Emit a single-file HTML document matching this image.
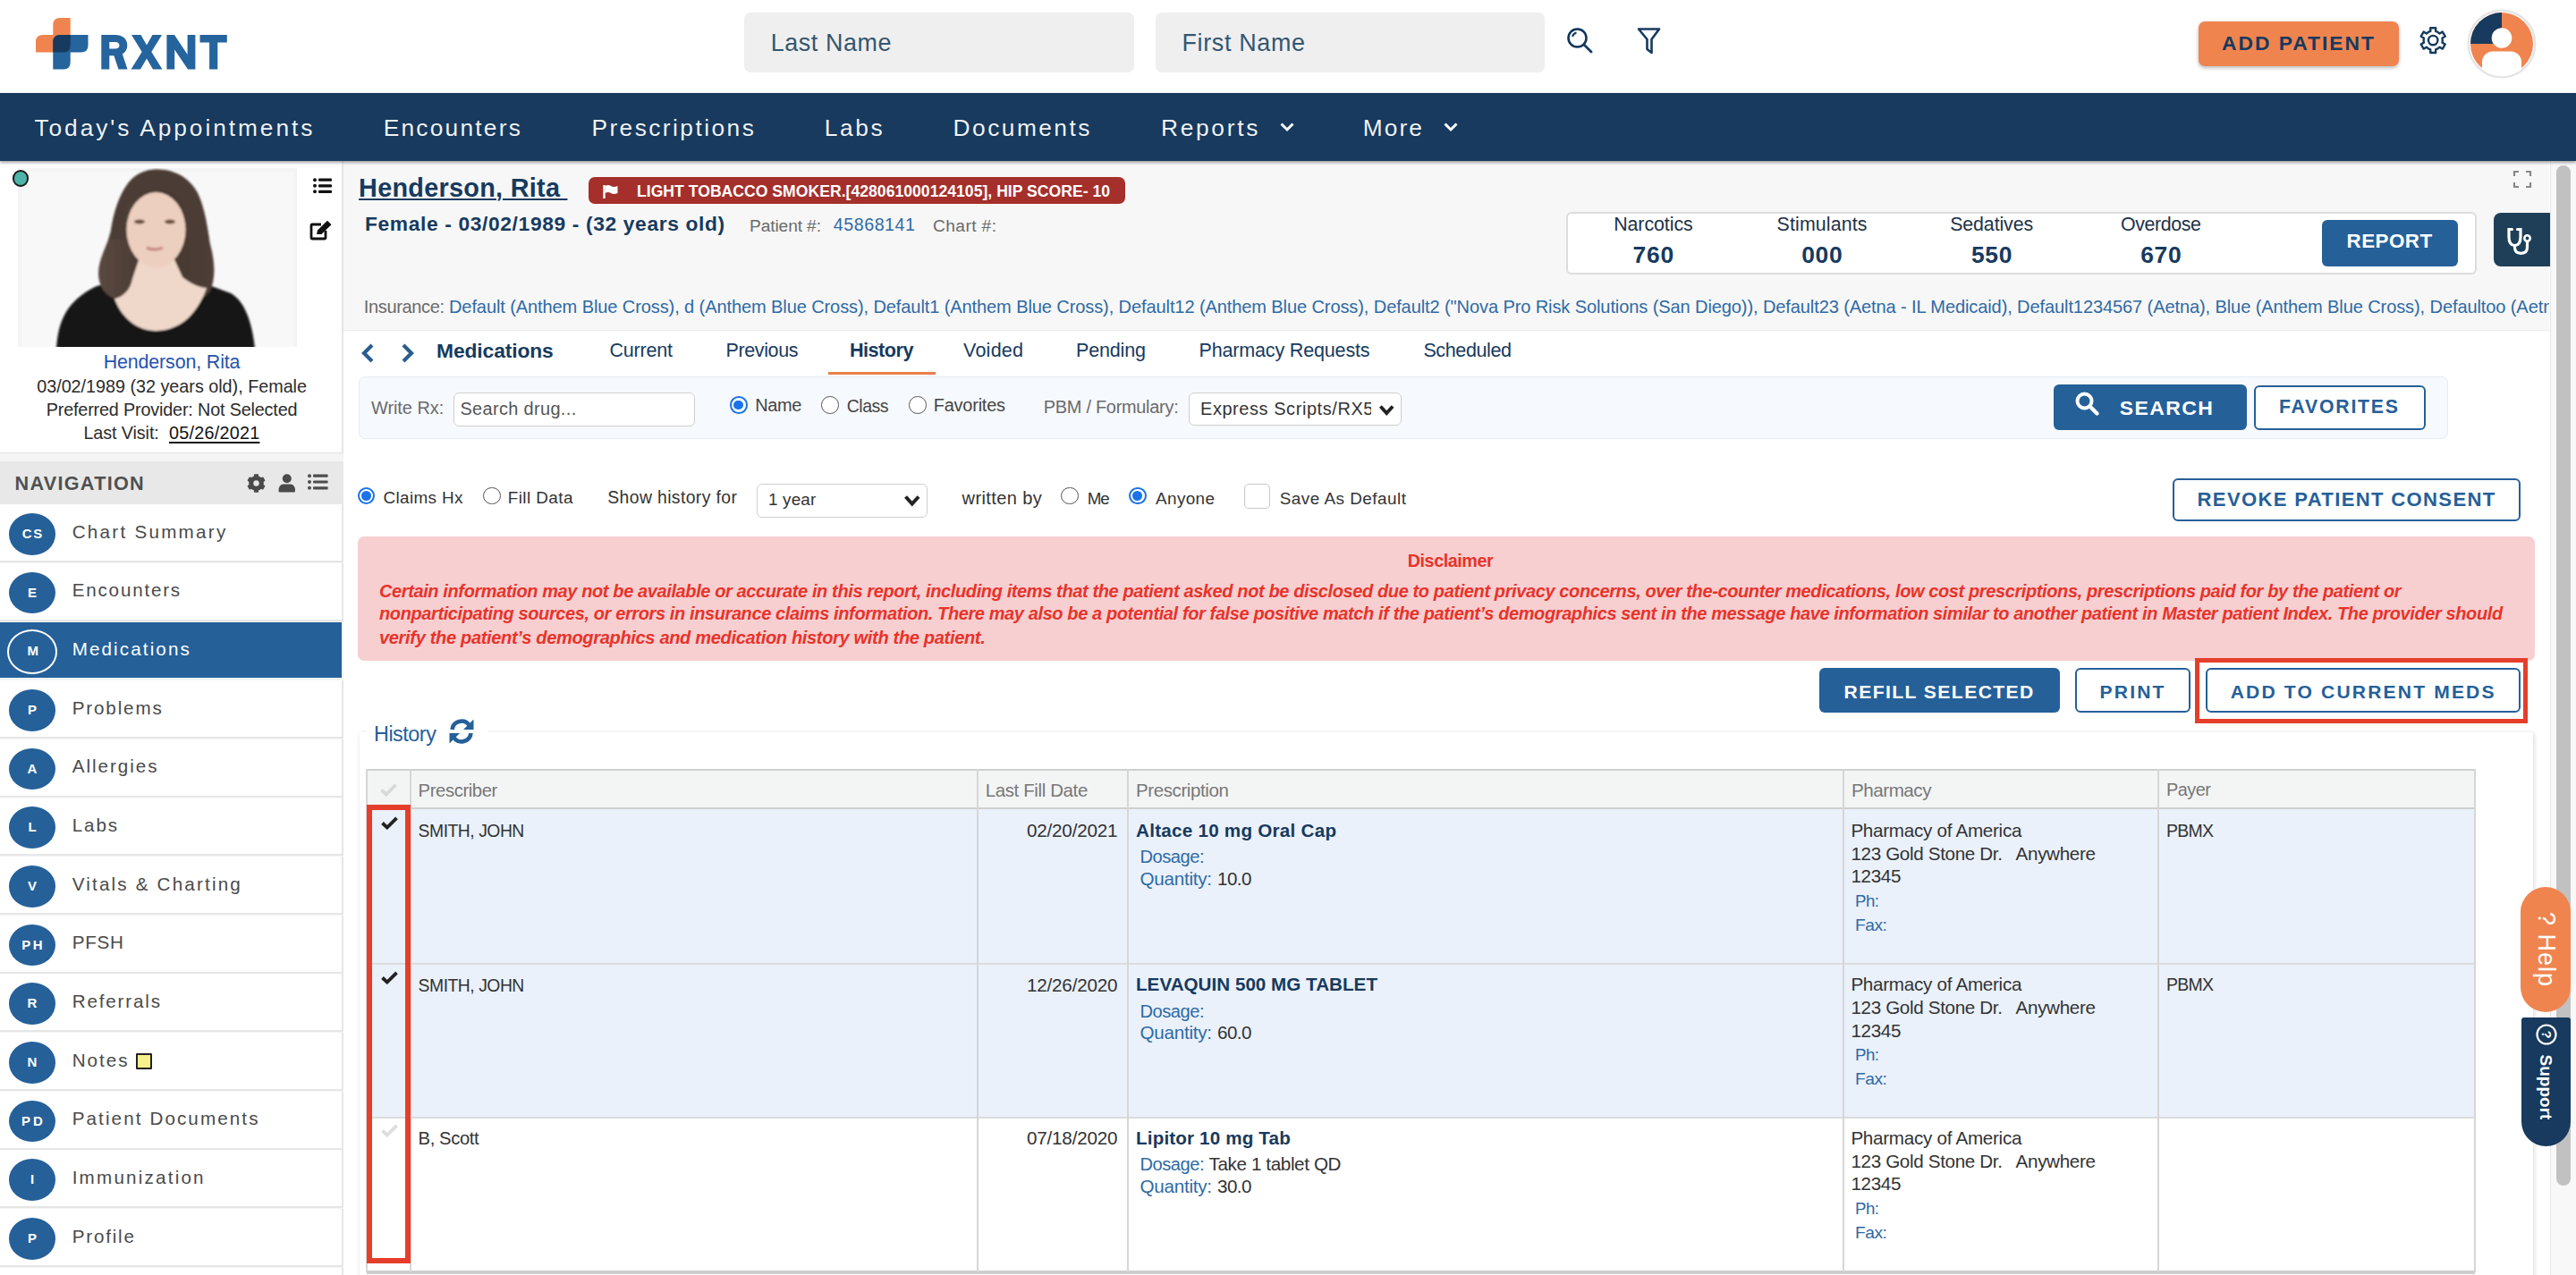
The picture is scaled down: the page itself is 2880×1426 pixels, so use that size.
<!DOCTYPE html>
<html><head><meta charset="utf-8"><style>
html,body{margin:0;padding:0;}
body{width:2880px;height:1426px;overflow:hidden;position:relative;background:#fff;font-family:"Liberation Sans",sans-serif;}
body>div,body>svg{position:absolute;}
.t{position:absolute;white-space:pre;line-height:1;}
</style></head><body>
<svg style="left:0;top:0" width="300" height="100" viewBox="0 0 300 100">
<path fill="#f0844f" d="M59.3 28 Q59.3 20 67.3 20 L78.7 20 L78.7 50.4 Q78.7 58.4 70.7 58.4 L40 58.4 L40 47 Q40 39 48 39 L59.3 39 Z"/>
<path fill="#25649d" d="M59.3 47 Q59.3 39 67.3 39 L98.5 39 L98.5 50.4 Q98.5 58.4 90.5 58.4 L78.7 58.4 L78.7 69.6 Q78.7 77.6 70.7 77.6 L59.3 77.6 Z"/>
<path fill="#173a5e" d="M59.3 47 Q59.3 39 67.3 39 L78.7 39 L78.7 50.4 Q78.7 58.4 70.7 58.4 L59.3 58.4 Z"/>
</svg>
<svg style="left:0;top:0" width="300" height="100" viewBox="0 0 300 100"><g fill="#25649d">
<path fill-rule="evenodd" d="M113.3 39 L129 39 C137.5 39 142.3 44 142.3 50.6 C142.3 57.5 137.5 62.3 129 62.3 L122.3 62.3 L122.3 77.6 L113.3 77.6 Z M122.3 47 L128.5 47 C131.8 47 133.5 48.6 133.5 50.7 C133.5 52.8 131.8 54.5 128.5 54.5 L122.3 54.5 Z"/>
<path d="M126 58 L136 58 L142.5 77.6 L132.5 77.6 Z"/>
<path d="M147 39 L157.5 39 L164 50.5 L170.5 39 L181 39 L169.3 58 L181.5 77.6 L171 77.6 L164 65.5 L157 77.6 L146.5 77.6 L158.7 58 Z"/>
<path d="M186.4 39 L195 39 L209.6 61 L209.6 39 L218.4 39 L218.4 77.6 L210 77.6 L195.2 55.5 L195.2 77.6 L186.4 77.6 Z"/>
<path d="M223.5 39 L253.8 39 L253.8 47.5 L243.3 47.5 L243.3 77.6 L234.1 77.6 L234.1 47.5 L223.5 47.5 Z"/>
</g></svg>
<div style="left:832.0px;top:14.0px;width:436.0px;height:67.0px;background:#efefef;border-radius:7px"></div>
<div style="left:1292.0px;top:14.0px;width:435.0px;height:67.0px;background:#efefef;border-radius:7px"></div>
<div class="t" id="lastname" style="left:861.7px;top:35.3px;font-size:26.90px;color:#35566f;letter-spacing:0.596px;">Last Name</div>
<div class="t" id="firstname" style="left:1321.5px;top:35.3px;font-size:26.90px;color:#35566f;letter-spacing:0.668px;">First Name</div>
<svg style="left:1748px;top:27px" width="40" height="40" viewBox="0 0 40 40">
<circle cx="15.5" cy="15.5" r="10" fill="none" stroke="#12355a" stroke-width="2.6"/>
<path d="M23 23 L31 31" stroke="#173a5e" stroke-width="2.8" stroke-linecap="round"/>
<path d="M10 14 Q11 10.5 14.5 9.5" fill="none" stroke="#173a5e" stroke-width="2"/>
</svg>
<svg style="left:1828px;top:28px" width="32" height="36" viewBox="0 0 32 36">
<path d="M4 4.5 L27 4.5 L18.5 16 L18.5 31 L13.5 27 L13.5 16 Z" fill="none" stroke="#173a5e" stroke-width="2.6" stroke-linejoin="round"/>
</svg>
<div style="left:2458.0px;top:24.0px;width:224.0px;height:50.0px;background:#f0844f;border-radius:7px;box-shadow:0 2px 4px rgba(0,0,0,.28)"></div>
<div class="t" id="addpat" style="left:2484.0px;top:37.0px;font-size:22.82px;color:#173a5e;font-weight:700;letter-spacing:2.003px;">ADD PATIENT</div>
<svg style="left:2700px;top:25px" width="42" height="42" viewBox="0 0 42 42">
<path d="M14.90 10.92 L17.27 9.91 L17.24 6.21 L23.16 6.21 L23.13 9.91 L25.50 10.92 L27.56 12.47 L30.75 10.59 L33.71 15.72 L30.49 17.54 L30.80 20.10 L30.49 22.66 L33.71 24.48 L30.75 29.61 L27.56 27.73 L25.50 29.28 L23.13 30.29 L23.16 33.99 L17.24 33.99 L17.27 30.29 L14.90 29.28 L12.84 27.73 L9.65 29.61 L6.69 24.48 L9.91 22.66 L9.60 20.10 L9.91 17.54 L6.69 15.72 L9.65 10.59 L12.84 12.47 Z" fill="none" stroke="#173a5e" stroke-width="2.4" stroke-linejoin="round"/>
<circle cx="20.2" cy="20.1" r="5.2" fill="none" stroke="#173a5e" stroke-width="2.4"/>
</svg>
<svg style="left:2750px;top:2px" width="94" height="94" viewBox="0 0 94 94">
<defs><clipPath id="avc"><circle cx="47" cy="47" r="35"/></clipPath><clipPath id="avc2"><circle cx="47" cy="47" r="36.2"/></clipPath></defs>
<circle cx="47" cy="47" r="37.3" fill="none" stroke="#e4e4e4" stroke-width="2.4"/>
<g clip-path="url(#avc)">
<rect x="0" y="0" width="94" height="94" fill="#f0844f"/>
<rect x="0" y="0" width="47" height="47" fill="#173a5e"/>
<circle cx="47" cy="40.5" r="11.3" fill="#fff"/>
</g>
<rect clip-path="url(#avc2)" x="25" y="55.6" width="44" height="50" rx="12" fill="#fff"/>
</svg>
<div style="left:0.0px;top:104.0px;width:2880.0px;height:76.0px;background:#173a5e;box-shadow:0 2px 3px rgba(0,0,0,.35);z-index:2"></div>
<div class="t" id="nav0" style="left:38.4px;top:129.9px;font-size:26.31px;color:rgba(255,255,255,.94);letter-spacing:2.948px;z-index:3">Today&#x27;s Appointments</div>
<div class="t" id="nav1" style="left:428.7px;top:129.9px;font-size:26.31px;color:rgba(255,255,255,.94);letter-spacing:2.231px;z-index:3">Encounters</div>
<div class="t" id="nav2" style="left:661.4px;top:129.9px;font-size:26.31px;color:rgba(255,255,255,.94);letter-spacing:2.451px;z-index:3">Prescriptions</div>
<div class="t" id="nav3" style="left:921.7px;top:129.9px;font-size:26.31px;color:rgba(255,255,255,.94);letter-spacing:2.624px;z-index:3">Labs</div>
<div class="t" id="nav4" style="left:1065.6px;top:129.9px;font-size:26.31px;color:rgba(255,255,255,.94);letter-spacing:2.476px;z-index:3">Documents</div>
<div class="t" id="nav5" style="left:1298.0px;top:129.9px;font-size:26.31px;color:rgba(255,255,255,.94);letter-spacing:2.705px;z-index:3">Reports</div>
<div class="t" id="nav6" style="left:1523.7px;top:129.9px;font-size:26.31px;color:rgba(255,255,255,.94);letter-spacing:2.127px;z-index:3">More</div>
<svg style="left:1428.5px;top:132px;z-index:3" width="20" height="20" viewBox="0 0 20 20"><path d="M3.5 6.5 L10 13 L16.5 6.5" fill="none" stroke="#fff" stroke-width="3"/></svg>
<svg style="left:1611.5px;top:132px;z-index:3" width="20" height="20" viewBox="0 0 20 20"><path d="M3.5 6.5 L10 13 L16.5 6.5" fill="none" stroke="#fff" stroke-width="3"/></svg>
<div style="left:0.0px;top:180.0px;width:384.0px;height:1246.0px;background:#f4f4f4"></div>
<div style="left:0.0px;top:180.0px;width:382.0px;height:326.0px;background:#fff;border-right:2px solid #e6e6e6;border-bottom:1.5px solid #e2e2e2;border-left:1px solid #ececec;box-sizing:content-box;left:-1px"></div>
<svg style="left:20px;top:188px" width="312" height="200" viewBox="0 0 312 200">
<defs><filter id="bl" x="-10%" y="-10%" width="120%" height="120%"><feGaussianBlur stdDeviation="1.3"/></filter>
<linearGradient id="hg" x1="0" y1="0" x2="1" y2="0"><stop offset="0" stop-color="#5a4840"/><stop offset="0.5" stop-color="#45372f"/><stop offset="1" stop-color="#4e3f37"/></linearGradient><clipPath id="hairc"><path d="M155 1.5 C178 1.5 198 14 205 38 C211 56 212 70 215 85 C219 100 222 118 216 135 C212 144 204 148 196 148 L186 136 L128 138 L108 146 C98 143 90 132 90 118 C90 100 100 88 104 70 C107 50 113 30 124 16 C132 6 144 1.5 155 1.5 Z"/></clipPath></defs>
<rect width="312" height="200" fill="#f4f4f4"/><rect x="4" y="4" width="304" height="196" fill="#f8f8f8"/>
<g filter="url(#bl)">
<path d="M43 202 C45 170 55 148 88 132 L112 126 L200 126 L238 140 C255 150 262 175 265 202 Z" fill="#131313"/>
<path d="M155 1.5 C178 1.5 198 14 205 38 C211 56 212 70 215 85 C219 100 222 118 216 135 C212 144 204 148 196 148 L186 136 L128 138 L108 146 C98 143 90 132 90 118 C90 100 100 88 104 70 C107 50 113 30 124 16 C132 6 144 1.5 155 1.5 Z" fill="url(#hg)"/>
<path d="M136 100 L174 100 L184 122 C194 130 204 134 211 134 C200 165 180 182 154 182 C134 182 116 168 108 146 C118 144 126 136 128 124 Z" fill="#efd7c9"/>
<ellipse cx="154.5" cy="69" rx="33" ry="42" fill="#edcfbf"/>
<path clip-path="url(#hairc)" d="M120 80 C116 36 132 22 154 26 C176 22 192 36 188 80 L240 80 L240 0 L60 0 L60 80 Z" fill="#4b3c34"/>
<ellipse cx="136" cy="60" rx="6" ry="2.6" fill="#6a5040"/>
<ellipse cx="170" cy="60" rx="6" ry="2.6" fill="#6a5040"/>
<path d="M144 89 Q152 93 162 89" stroke="#c8898a" stroke-width="3.5" fill="none"/>
</g></svg>
<div style="left:13.9px;top:190.0px;width:18.0px;height:19.0px;background:#4fb3a9;border:2px solid #1a1a1a;border-radius:9px;box-sizing:border-box"></div>
<svg style="left:350px;top:199px" width="21" height="17.5" viewBox="0 0 21 17.5">
<g fill="#111"><circle cx="2" cy="2.2" r="2"/><circle cx="2" cy="8.8" r="2"/><circle cx="2" cy="15.3" r="2"/>
<rect x="6" y="0.6" width="15" height="3.2" rx="1"/><rect x="6" y="7.2" width="15" height="3.2" rx="1"/><rect x="6" y="13.7" width="15" height="3.2" rx="1"/></g></svg>
<svg style="left:345px;top:246px" width="28" height="24" viewBox="0 0 28 24">
<path d="M14 5 L4 5 Q3 5 3 6 L3 20 Q3 21 4 21 L18 21 Q19 21 19 20 L19 12" fill="none" stroke="#111" stroke-width="2.8"/>
<path d="M9 16 L10 11.5 L21 0.8 L25.5 5.2 L14.5 16 Z" fill="#111"/>
</svg>
<div class="t" id="sb_name" style="left:115.7px;top:394.9px;font-size:21.40px;color:#2553b0;letter-spacing:-0.127px;">Henderson, Rita</div>
<div class="t" id="sb_dob" style="left:41.2px;top:422.9px;font-size:19.80px;color:#2b2b2b;letter-spacing:-0.018px;">03/02/1989 (32 years old), Female</div>
<div class="t" id="sb_pp" style="left:51.7px;top:449.0px;font-size:19.80px;color:#2b2b2b;letter-spacing:-0.164px;">Preferred Provider: Not Selected</div>
<div class="t" id="sb_lv" style="left:93.4px;top:475.1px;font-size:19.80px;color:#2b2b2b;letter-spacing:-0.101px;">Last Visit:</div>
<div class="t" id="sb_lvd" style="left:189.0px;top:475.1px;font-size:19.80px;color:#111;letter-spacing:0.243px;text-decoration:underline;text-underline-offset:3px;text-decoration-thickness:2px">05/26/2021</div>
<div style="left:0.0px;top:516.0px;width:384.0px;height:48.0px;background:#e8e8e8"></div>
<div class="t" id="sb_navh" style="left:16.5px;top:530.4px;font-size:21.66px;color:#505050;font-weight:700;letter-spacing:1.274px;">NAVIGATION</div>
<svg style="left:274px;top:528px" width="25" height="25" viewBox="0 0 25 25"><path d="M8.70 5.92 L10.55 5.16 L10.64 3.08 L14.36 3.08 L14.45 5.16 L16.30 5.92 L17.88 7.14 L19.73 6.18 L21.59 9.40 L19.84 10.52 L20.10 12.50 L19.84 14.48 L21.59 15.60 L19.73 18.82 L17.88 17.86 L16.30 19.08 L14.45 19.84 L14.36 21.92 L10.64 21.92 L10.55 19.84 L8.70 19.08 L7.12 17.86 L5.27 18.82 L3.41 15.60 L5.16 14.48 L4.90 12.50 L5.16 10.52 L3.41 9.40 L5.27 6.18 L7.12 7.14 Z" fill="#4a4a4a" stroke="#4a4a4a" stroke-width="1.5" stroke-linejoin="round"/><circle cx="12.5" cy="12.5" r="3.2" fill="#e8e8e8"/></svg>
<svg style="left:311px;top:530px" width="20" height="21" viewBox="0 0 20 21"><circle cx="9.8" cy="5.2" r="5" fill="#4a4a4a"/><path d="M0.5 19 Q0.5 11.5 6 11.5 L13.5 11.5 Q19 11.5 19 19 Q19 20.5 17.5 20.5 L2 20.5 Q0.5 20.5 0.5 19 Z" fill="#4a4a4a"/></svg>
<svg style="left:344px;top:530px" width="22.6" height="18" viewBox="0 0 22.6 18">
<g fill="#4d4d4d"><circle cx="2" cy="2.2" r="2"/><circle cx="2" cy="9.0" r="2"/><circle cx="2" cy="15.8" r="2"/>
<rect x="6" y="0.6" width="16.6" height="3.2" rx="1"/><rect x="6" y="7.4" width="16.6" height="3.2" rx="1"/><rect x="6" y="14.2" width="16.6" height="3.2" rx="1"/></g></svg>
<div style="left:0.0px;top:1417.7px;width:382.0px;height:63.0px;background:#fff;border-right:2px solid #e6e6e6"></div>
<div style="left:0.0px;top:564.0px;width:382.0px;height:63.0px;background:#fff;border-bottom:2px solid #e6e6e6;border-right:2px solid #e6e6e6"></div>
<div style="left:10.0px;top:574.0px;width:52.0px;height:46.5px;background:#256099;border-radius:50%"></div>
<div class="t" id="ini0" style="left:24.8px;top:588.9px;font-size:15.00px;color:#fff;font-weight:700;letter-spacing:1.656px;">CS</div>
<div class="t" id="sbn0" style="left:80.7px;top:584.5px;font-size:20.64px;color:#4a4a4a;letter-spacing:2.258px;">Chart Summary</div>
<div style="left:0.0px;top:629.7px;width:382.0px;height:63.0px;background:#fff;border-bottom:2px solid #e6e6e6;border-right:2px solid #e6e6e6"></div>
<div style="left:10.0px;top:639.7px;width:52.0px;height:46.5px;background:#256099;border-radius:50%"></div>
<div class="t" id="ini1" style="left:30.5px;top:654.6px;font-size:15.00px;color:#fff;font-weight:700;width:11px;text-align:center">E</div>
<div class="t" id="sbn1" style="left:80.7px;top:650.2px;font-size:20.64px;color:#4a4a4a;letter-spacing:1.795px;">Encounters</div>
<div style="left:0.0px;top:696.3px;width:382.0px;height:61.6px;background:#256099"></div>
<div style="left:8.0px;top:704.3px;width:55.5px;height:49.5px;border:2.6px solid #fff;border-radius:50%;box-sizing:border-box"></div>
<div class="t" id="ini2" style="left:30.5px;top:720.2px;font-size:15.00px;color:#fff;font-weight:700;width:11px;text-align:center">M</div>
<div class="t" id="sbn2" style="left:80.7px;top:715.9px;font-size:20.64px;color:#fff;letter-spacing:2.104px;">Medications</div>
<div style="left:0.0px;top:761.0px;width:382.0px;height:63.0px;background:#fff;border-bottom:2px solid #e6e6e6;border-right:2px solid #e6e6e6"></div>
<div style="left:10.0px;top:771.0px;width:52.0px;height:46.5px;background:#256099;border-radius:50%"></div>
<div class="t" id="ini3" style="left:30.5px;top:785.9px;font-size:15.00px;color:#fff;font-weight:700;width:11px;text-align:center">P</div>
<div class="t" id="sbn3" style="left:80.7px;top:781.5px;font-size:20.64px;color:#4a4a4a;letter-spacing:1.854px;">Problems</div>
<div style="left:0.0px;top:826.7px;width:382.0px;height:63.0px;background:#fff;border-bottom:2px solid #e6e6e6;border-right:2px solid #e6e6e6"></div>
<div style="left:10.0px;top:836.7px;width:52.0px;height:46.5px;background:#256099;border-radius:50%"></div>
<div class="t" id="ini4" style="left:30.5px;top:851.6px;font-size:15.00px;color:#fff;font-weight:700;width:11px;text-align:center">A</div>
<div class="t" id="sbn4" style="left:80.7px;top:847.2px;font-size:20.64px;color:#4a4a4a;letter-spacing:1.962px;">Allergies</div>
<div style="left:0.0px;top:892.4px;width:382.0px;height:63.0px;background:#fff;border-bottom:2px solid #e6e6e6;border-right:2px solid #e6e6e6"></div>
<div style="left:10.0px;top:902.4px;width:52.0px;height:46.5px;background:#256099;border-radius:50%"></div>
<div class="t" id="ini5" style="left:30.5px;top:917.2px;font-size:15.00px;color:#fff;font-weight:700;width:11px;text-align:center">L</div>
<div class="t" id="sbn5" style="left:80.7px;top:912.9px;font-size:20.64px;color:#4a4a4a;letter-spacing:1.922px;">Labs</div>
<div style="left:0.0px;top:958.0px;width:382.0px;height:63.0px;background:#fff;border-bottom:2px solid #e6e6e6;border-right:2px solid #e6e6e6"></div>
<div style="left:10.0px;top:968.0px;width:52.0px;height:46.5px;background:#256099;border-radius:50%"></div>
<div class="t" id="ini6" style="left:30.5px;top:982.9px;font-size:15.00px;color:#fff;font-weight:700;width:11px;text-align:center">V</div>
<div class="t" id="sbn6" style="left:80.7px;top:978.5px;font-size:20.64px;color:#4a4a4a;letter-spacing:2.178px;">Vitals &amp; Charting</div>
<div style="left:0.0px;top:1023.7px;width:382.0px;height:63.0px;background:#fff;border-bottom:2px solid #e6e6e6;border-right:2px solid #e6e6e6"></div>
<div style="left:10.0px;top:1033.7px;width:52.0px;height:46.5px;background:#256099;border-radius:50%"></div>
<div class="t" id="ini7" style="left:24.2px;top:1048.6px;font-size:15.00px;color:#fff;font-weight:700;letter-spacing:2.656px;">PH</div>
<div class="t" id="sbn7" style="left:80.7px;top:1044.2px;font-size:20.64px;color:#4a4a4a;letter-spacing:0.762px;">PFSH</div>
<div style="left:0.0px;top:1089.4px;width:382.0px;height:63.0px;background:#fff;border-bottom:2px solid #e6e6e6;border-right:2px solid #e6e6e6"></div>
<div style="left:10.0px;top:1099.4px;width:52.0px;height:46.5px;background:#256099;border-radius:50%"></div>
<div class="t" id="ini8" style="left:30.5px;top:1114.3px;font-size:15.00px;color:#fff;font-weight:700;width:11px;text-align:center">R</div>
<div class="t" id="sbn8" style="left:80.7px;top:1109.9px;font-size:20.64px;color:#4a4a4a;letter-spacing:1.829px;">Referrals</div>
<div style="left:0.0px;top:1155.0px;width:382.0px;height:63.0px;background:#fff;border-bottom:2px solid #e6e6e6;border-right:2px solid #e6e6e6"></div>
<div style="left:10.0px;top:1165.0px;width:52.0px;height:46.5px;background:#256099;border-radius:50%"></div>
<div class="t" id="ini9" style="left:30.5px;top:1179.9px;font-size:15.00px;color:#fff;font-weight:700;width:11px;text-align:center">N</div>
<div class="t" id="sbn9" style="left:80.7px;top:1175.6px;font-size:20.64px;color:#4a4a4a;letter-spacing:1.978px;">Notes</div>
<div style="left:152.0px;top:1177.5px;width:17.6px;height:18.0px;background:#f6f18a;border:2px solid #222;box-sizing:border-box;border-radius:1px"></div>
<div style="left:0.0px;top:1220.7px;width:382.0px;height:63.0px;background:#fff;border-bottom:2px solid #e6e6e6;border-right:2px solid #e6e6e6"></div>
<div style="left:10.0px;top:1230.7px;width:52.0px;height:46.5px;background:#256099;border-radius:50%"></div>
<div class="t" id="ini10" style="left:24.1px;top:1245.6px;font-size:15.00px;color:#fff;font-weight:700;letter-spacing:2.956px;">PD</div>
<div class="t" id="sbn10" style="left:80.7px;top:1241.2px;font-size:20.64px;color:#4a4a4a;letter-spacing:2.096px;">Patient Documents</div>
<div style="left:0.0px;top:1286.4px;width:382.0px;height:63.0px;background:#fff;border-bottom:2px solid #e6e6e6;border-right:2px solid #e6e6e6"></div>
<div style="left:10.0px;top:1296.4px;width:52.0px;height:46.5px;background:#256099;border-radius:50%"></div>
<div class="t" id="ini11" style="left:30.5px;top:1311.3px;font-size:15.00px;color:#fff;font-weight:700;width:11px;text-align:center">I</div>
<div class="t" id="sbn11" style="left:80.7px;top:1306.9px;font-size:20.64px;color:#4a4a4a;letter-spacing:2.204px;">Immunization</div>
<div style="left:0.0px;top:1352.0px;width:382.0px;height:63.0px;background:#fff;border-bottom:2px solid #e6e6e6;border-right:2px solid #e6e6e6"></div>
<div style="left:10.0px;top:1362.0px;width:52.0px;height:46.5px;background:#256099;border-radius:50%"></div>
<div class="t" id="ini12" style="left:30.5px;top:1376.9px;font-size:15.00px;color:#fff;font-weight:700;width:11px;text-align:center">P</div>
<div class="t" id="sbn12" style="left:80.7px;top:1372.6px;font-size:20.64px;color:#4a4a4a;letter-spacing:1.805px;">Profile</div>
<div style="left:384.0px;top:180.0px;width:2466.0px;height:188.5px;background:#f7f7f7;border-bottom:1.5px solid #ececec"></div>
<div class="t" id="mh_name" style="left:401.1px;top:196.0px;font-size:28.80px;color:#173a5e;font-weight:700;letter-spacing:0.285px;text-decoration:underline;text-decoration-thickness:2.2px;text-underline-offset:1.5px">Henderson, Rita </div>
<div style="left:658.0px;top:198.0px;width:600.0px;height:29.5px;background:#a52f2b;border-radius:7px"></div>
<svg style="left:673px;top:206px" width="20" height="17" viewBox="0 0 20 17"><path d="M2.5 1 L2.5 16" stroke="#fff" stroke-width="2.4"/><path d="M3.5 2 Q7 0 10 2 Q13 4 17.5 2 L17.5 10 Q13 12 10 10 Q7 8 3.5 10 Z" fill="#fff"/></svg>
<div class="t" id="mh_flag" style="left:712.0px;top:205.5px;font-size:17.59px;color:#fff;font-weight:700;letter-spacing:0.024px;">LIGHT TOBACCO SMOKER.[428061000124105], HIP SCORE- 10</div>
<div class="t" id="mh_fem" style="left:407.9px;top:238.5px;font-size:22.79px;color:#173a5e;font-weight:700;letter-spacing:0.640px;">Female - 03/02/1989 - (32 years old)</div>
<div class="t" id="mh_pn" style="left:838.0px;top:242.8px;font-size:19.19px;color:#6a6a6a;letter-spacing:-0.118px;">Patient #:</div>
<div class="t" id="mh_pnv" style="left:931.8px;top:242.3px;font-size:19.68px;color:#2f6aa5;letter-spacing:0.521px;">45868141</div>
<div class="t" id="mh_cn" style="left:1043.0px;top:242.8px;font-size:19.19px;color:#6a6a6a;letter-spacing:0.393px;">Chart #:</div>
<svg style="left:2809px;top:190px" width="22" height="21" viewBox="0 0 22 21"><g fill="none" stroke="#888" stroke-width="2.2"><path d="M2 7 L2 2 L7 2"/><path d="M15 2 L20 2 L20 7"/><path d="M2 14 L2 19 L7 19"/><path d="M15 19 L20 19 L20 14"/></g></svg>
<div style="left:1750.6px;top:236.6px;width:1018.4px;height:70.0px;background:#fff;border:2.5px solid #dcdcdc;border-radius:6px;box-sizing:border-box"></div>
<div class="t" id="nc_Narcotics" style="left:1804.2px;top:240.7px;font-size:21.37px;color:#1e3247;letter-spacing:-0.063px;">Narcotics</div>
<div class="t" id="nv_Narcotics" style="left:1825.6px;top:271.6px;font-size:26.45px;color:#173a5e;font-weight:700;letter-spacing:0.722px;">760</div>
<div class="t" id="nc_Stimulants" style="left:1986.6px;top:240.7px;font-size:21.37px;color:#1e3247;letter-spacing:0.132px;">Stimulants</div>
<div class="t" id="nv_Stimulants" style="left:2014.2px;top:271.6px;font-size:26.45px;color:#173a5e;font-weight:700;letter-spacing:0.722px;">000</div>
<div class="t" id="nc_Sedatives" style="left:2180.2px;top:240.7px;font-size:21.37px;color:#1e3247;letter-spacing:-0.109px;">Sedatives</div>
<div class="t" id="nv_Sedatives" style="left:2203.9px;top:271.6px;font-size:26.45px;color:#173a5e;font-weight:700;letter-spacing:0.722px;">550</div>
<div class="t" id="nc_Overdose" style="left:2371.1px;top:240.7px;font-size:21.37px;color:#1e3247;letter-spacing:-0.396px;">Overdose</div>
<div class="t" id="nv_Overdose" style="left:2393.2px;top:271.6px;font-size:26.45px;color:#173a5e;font-weight:700;letter-spacing:0.722px;">670</div>
<div style="left:2596.1px;top:246.1px;width:151.8px;height:51.8px;background:#256099;border-radius:6px"></div>
<div class="t" id="btn_report" style="left:2623.5px;top:259.0px;font-size:22.40px;color:#fff;font-weight:700;letter-spacing:0.457px;">REPORT</div>
<div style="left:2788.2px;top:237.8px;width:70.0px;height:60.1px;background:#1f3f58;border-radius:8px"></div>
<svg style="left:2795px;top:250px" width="40" height="40" viewBox="2795 250 40 40"><g fill="none" stroke="#fff" stroke-width="3.2" stroke-linecap="round"><path d="M2808.5 256.5 L2805 256.5 L2805 265 Q2805 274.5 2811.5 274.5 Q2818 274.5 2818 265 L2818 256.5 L2814.5 256.5"/><path d="M2811.5 274.5 L2811.5 276.5 Q2811.5 283.3 2818.5 283.3 Q2825.5 283.3 2825.5 276.5 L2825.5 270"/></g><circle cx="2825.5" cy="266.5" r="3.2" fill="#1f3f58" stroke="#fff" stroke-width="2.6"/></svg>
<div style="left:384px;top:320px;width:2466px;height:40px;overflow:hidden">
<div class="t" id="ins_l" style="left:22.8px;top:12.6px;font-size:20.06px;color:#6a6a6a;letter-spacing:-0.378px;">Insurance:</div>
<div class="t" id="ins_v" style="left:118.0px;top:12.6px;font-size:20.06px;color:#2f6aa5;letter-spacing:-0.110px;position:absolute">Default (Anthem Blue Cross), d (Anthem Blue Cross), Default1 (Anthem Blue Cross), Default12 (Anthem Blue Cross), Default2 (&quot;Nova Pro Risk Solutions (San Diego)), Default23 (Aetna - IL Medicaid), Default1234567 (Aetna), Blue (Anthem Blue Cross), Defaultoo (Aetna</div>
</div>
<svg style="left:400px;top:382px" width="70" height="26" viewBox="0 0 70 26"><g fill="none" stroke="#2a5d8f" stroke-width="4.2" stroke-linejoin="miter"><path d="M16 4 L7 13 L16 22"/><path d="M51 4 L60 13 L51 22"/></g></svg>
<div class="t" id="tab_med" style="left:488.0px;top:381.1px;font-size:22.82px;color:#173a5e;font-weight:700;letter-spacing:-0.104px;">Medications</div>
<div class="t" id="tab_Curre" style="left:681.5px;top:382.2px;font-size:21.51px;color:#173a5e;letter-spacing:-0.218px;">Current</div>
<div class="t" id="tab_Previ" style="left:811.4px;top:382.2px;font-size:21.51px;color:#173a5e;letter-spacing:-0.352px;">Previous</div>
<div class="t" id="tab_Voide" style="left:1077.0px;top:382.2px;font-size:21.51px;color:#173a5e;letter-spacing:0.246px;">Voided</div>
<div class="t" id="tab_Pendi" style="left:1203.0px;top:382.2px;font-size:21.51px;color:#173a5e;letter-spacing:-0.152px;">Pending</div>
<div class="t" id="tab_Pharm" style="left:1340.5px;top:382.2px;font-size:21.51px;color:#173a5e;letter-spacing:-0.157px;">Pharmacy Requests</div>
<div class="t" id="tab_Sched" style="left:1591.4px;top:382.2px;font-size:21.51px;color:#173a5e;letter-spacing:-0.379px;">Scheduled</div>
<div class="t" id="tab_hist" style="left:949.9px;top:380.5px;font-size:21.61px;color:#173a5e;font-weight:700;letter-spacing:-0.477px;">History</div>
<div style="left:926.0px;top:415.5px;width:120.0px;height:3.0px;background:#e8804a"></div>
<div style="left:400.7px;top:420.5px;width:2336.3px;height:70.5px;background:#f6f9fd;border:1.5px solid #e4ecf6;border-radius:7px;box-sizing:border-box"></div>
<div class="t" id="wr_l" style="left:415.0px;top:446.6px;font-size:19.91px;color:#6a6a6a;letter-spacing:-0.037px;">Write Rx:</div>
<div style="left:506.7px;top:438.6px;width:270.3px;height:38.6px;background:#fff;border:1.5px solid #cfcfcf;border-radius:6px;box-sizing:border-box"></div>
<div class="t" id="wr_ph" style="left:514.4px;top:448.1px;font-size:19.91px;color:#555;letter-spacing:0.364px;">Search drug...</div>
<div style="left:816.0px;top:443.2px;width:19.5px;height:19.5px;border:2px solid #1a73e8;border-radius:50%;box-sizing:border-box;background:#fff"></div>
<div style="left:820.3px;top:447.5px;width:10.9px;height:10.9px;background:#1a73e8;border-radius:50%"></div>
<div class="t" id="wr_name" style="left:844.2px;top:444.3px;font-size:19.91px;color:#444;letter-spacing:-0.306px;">Name</div>
<div style="left:918.0px;top:443.2px;width:19.5px;height:19.5px;border:1.5px solid #555;border-radius:50%;box-sizing:border-box;background:#fff"></div>
<div class="t" id="wr_class" style="left:946.7px;top:444.7px;font-size:19.48px;color:#444;letter-spacing:-0.468px;">Class</div>
<div style="left:1016.0px;top:443.2px;width:19.5px;height:19.5px;border:1.5px solid #555;border-radius:50%;box-sizing:border-box;background:#fff"></div>
<div class="t" id="wr_fav" style="left:1043.8px;top:444.3px;font-size:19.91px;color:#444;letter-spacing:-0.211px;">Favorites</div>
<div class="t" id="wr_pbm" style="left:1166.8px;top:446.1px;font-size:19.91px;color:#6a6a6a;letter-spacing:-0.265px;">PBM / Formulary:</div>
<div style="left:1329.0px;top:439.2px;width:238.0px;height:37.3px;background:#fff;border:1.5px solid #cfcfcf;border-radius:6px;box-sizing:border-box"></div>
<div style="left:1342px;top:440px;width:191px;height:35px;overflow:hidden">
<div class="t" id="wr_sel" style="left:0.0px;top:8.1px;font-size:19.91px;color:#333;letter-spacing:0.600px;position:absolute">Express Scripts/RX5001</div>
</div>
<svg style="left:1541px;top:452px" width="18.5" height="13" viewBox="0 0 18.5 13"><path d="M2.4 2.4 L9.25 10.1 L16.1 2.4" fill="none" stroke="#222" stroke-width="3.8"/></svg>
<div style="left:2296.0px;top:430.0px;width:215.7px;height:51.4px;background:#256099;border-radius:6px"></div>
<svg style="left:2319px;top:437px" width="30" height="30" viewBox="0 0 30 30"><circle cx="11.5" cy="11.5" r="8" fill="none" stroke="#fff" stroke-width="4"/><path d="M17.5 17.5 L25.5 25.5" stroke="#fff" stroke-width="4.4" stroke-linecap="round"/></svg>
<div class="t" id="btn_search" style="left:2369.8px;top:444.9px;font-size:22.97px;color:#fff;font-weight:700;letter-spacing:1.404px;">SEARCH</div>
<div style="left:2520.0px;top:430.6px;width:191.5px;height:50.6px;background:#fff;border:2px solid #256099;border-radius:6px;box-sizing:border-box"></div>
<div class="t" id="btn_fav" style="left:2547.9px;top:444.4px;font-size:21.22px;color:#256099;font-weight:700;letter-spacing:1.801px;">FAVORITES</div>
<div style="left:399.7px;top:544.5px;width:19.5px;height:19.5px;border:2px solid #1a73e8;border-radius:50%;box-sizing:border-box;background:#fff"></div>
<div style="left:404.0px;top:548.8px;width:10.9px;height:10.9px;background:#1a73e8;border-radius:50%"></div>
<div class="t" id="r2_claims" style="left:428.4px;top:547.8px;font-size:18.90px;color:#333;letter-spacing:0.382px;">Claims Hx</div>
<div style="left:540.0px;top:544.5px;width:19.5px;height:19.5px;border:1.5px solid #555;border-radius:50%;box-sizing:border-box;background:#fff"></div>
<div class="t" id="r2_fill" style="left:567.8px;top:547.8px;font-size:18.90px;color:#333;letter-spacing:0.417px;">Fill Data</div>
<div class="t" id="r2_show" style="left:679.3px;top:547.4px;font-size:19.38px;color:#333;letter-spacing:0.386px;">Show history for</div>
<div style="left:846.4px;top:540.8px;width:191.0px;height:38.2px;background:#fff;border:1.5px solid #cfcfcf;border-radius:6px;box-sizing:border-box"></div>
<div class="t" id="r2_year" style="left:859.0px;top:550.0px;font-size:18.90px;color:#333;letter-spacing:0.159px;">1 year</div>
<svg style="left:1010px;top:553px" width="19.5" height="13.5" viewBox="0 0 19.5 13.5"><path d="M2.5 2.5 L9.75 10.5 L17.0 2.5" fill="none" stroke="#222" stroke-width="4"/></svg>
<div class="t" id="r2_wb" style="left:1075.6px;top:546.8px;font-size:20.02px;color:#333;letter-spacing:0.396px;">written by</div>
<div style="left:1186.0px;top:544.5px;width:19.5px;height:19.5px;border:1.5px solid #555;border-radius:50%;box-sizing:border-box;background:#fff"></div>
<div class="t" id="r2_me" style="left:1215.7px;top:549.1px;font-size:18.79px;color:#333;letter-spacing:-1.004px;">Me</div>
<div style="left:1262.0px;top:544.5px;width:19.5px;height:19.5px;border:2px solid #1a73e8;border-radius:50%;box-sizing:border-box;background:#fff"></div>
<div style="left:1266.3px;top:548.8px;width:10.9px;height:10.9px;background:#1a73e8;border-radius:50%"></div>
<div class="t" id="r2_any" style="left:1292.0px;top:549.0px;font-size:18.90px;color:#333;letter-spacing:0.388px;">Anyone</div>
<div style="left:1390.6px;top:540.5px;width:29.0px;height:28.7px;background:#fff;border:1.5px solid #c8c8c8;border-radius:5px;box-sizing:border-box"></div>
<div class="t" id="r2_save" style="left:1430.7px;top:549.0px;font-size:18.90px;color:#333;letter-spacing:0.494px;">Save As Default</div>
<div style="left:2428.5px;top:534.5px;width:389.0px;height:48.5px;background:#fff;border:2px solid #256099;border-radius:6px;box-sizing:border-box"></div>
<div class="t" id="btn_revoke" style="left:2456.6px;top:548.3px;font-size:22.09px;color:#256099;font-weight:700;letter-spacing:1.335px;">REVOKE PATIENT CONSENT</div>
<div style="left:400.0px;top:600.0px;width:2434.0px;height:139.0px;background:#f7cfd1;border-radius:7px"></div>
<div class="t" id="dc_t" style="left:1573.7px;top:618.0px;font-size:19.76px;color:#e8332a;font-weight:700;letter-spacing:-0.427px;">Disclaimer</div>
<div class="t" id="dc_1" style="left:424.0px;top:651.7px;font-size:19.94px;color:#e8332a;font-weight:700;font-style:italic;letter-spacing:-0.360px;">Certain information may not be available or accurate in this report, including items that the patient asked not be disclosed due to patient privacy concerns, over the-counter medications, low cost prescriptions, prescriptions paid for by the patient or</div>
<div class="t" id="dc_2" style="left:424.0px;top:677.1px;font-size:19.94px;color:#e8332a;font-weight:700;font-style:italic;letter-spacing:-0.364px;">nonparticipating sources, or errors in insurance claims information. There may also be a potential for false positive match if the patient’s demographics sent in the message have information similar to another patient in Master patient Index. The provider should</div>
<div class="t" id="dc_3" style="left:424.0px;top:703.0px;font-size:20.06px;color:#e8332a;font-weight:700;font-style:italic;letter-spacing:-0.339px;">verify the patient’s demographics and medication history with the patient.</div>
<div style="left:2034.0px;top:746.5px;width:269.4px;height:50.9px;background:#256099;border-radius:6px"></div>
<div class="t" id="btn_refill" style="left:2061.5px;top:762.5px;font-size:21.08px;color:#fff;font-weight:700;letter-spacing:1.441px;">REFILL SELECTED</div>
<div style="left:2320.0px;top:746.5px;width:129.3px;height:50.9px;background:#fff;border:2px solid #256099;border-radius:6px;box-sizing:border-box"></div>
<div class="t" id="btn_print" style="left:2347.5px;top:762.5px;font-size:21.08px;color:#256099;font-weight:700;letter-spacing:2.191px;">PRINT</div>
<div style="left:2466.3px;top:746.5px;width:351.3px;height:50.9px;background:#fff;border:2px solid #256099;border-radius:6px;box-sizing:border-box"></div>
<div class="t" id="btn_add" style="left:2493.7px;top:762.5px;font-size:21.08px;color:#256099;font-weight:700;letter-spacing:2.154px;">ADD TO CURRENT MEDS</div>
<div style="left:2454.4px;top:736.2px;width:371.6px;height:72.5px;border:5px solid #e53e2b;box-sizing:border-box"></div>
<div style="left:402.0px;top:819.0px;width:2430.0px;height:620.0px;background:#fff;box-shadow:1px 1px 5px rgba(0,0,0,.17);border-radius:3px"></div>
<div style="left:410.0px;top:800.0px;width:135.5px;height:36.0px;background:#fff"></div>
<div class="t" id="hist_t" style="left:418.0px;top:809.8px;font-size:23.33px;color:#256099;letter-spacing:-0.465px;">History</div>
<svg style="left:500px;top:802px" width="32" height="32" viewBox="0 0 32 32"><g fill="none" stroke="#256099" stroke-width="4.6"><path d="M5.5 14 A10.5 10.5 0 0 1 24.5 9"/><path d="M26.5 18 A10.5 10.5 0 0 1 7.5 23"/></g><path d="M29.5 2.5 L29.5 14 L18 14 Z" fill="#256099"/><path d="M2.5 29.5 L2.5 18 L14 18 Z" fill="#256099"/></svg>
<div style="left:410.3px;top:860.4px;width:2356.7px;height:44.6px;background:#f3f5f5;border-top:2px solid #cfcfcf;border-bottom:2.5px solid #cfcfcf;box-sizing:border-box"></div>
<div style="left:410.3px;top:905.0px;width:2356.7px;height:174.0px;background:#eaf1fb;border-bottom:2px solid #dcdcdc;box-sizing:border-box"></div>
<div style="left:410.3px;top:1079.0px;width:2356.7px;height:172.0px;background:#eaf1fb;border-bottom:2px solid #dcdcdc;box-sizing:border-box"></div>
<div style="left:410.3px;top:1251.0px;width:2356.7px;height:172.0px;background:#fff;border-bottom:2px solid #dcdcdc;box-sizing:border-box"></div>
<div style="left:410.3px;top:1421.0px;width:2356.7px;height:3.5px;background:#cdcdcd"></div>
<div style="left:409.3px;top:860.4px;width:2.0px;height:562.6px;background:#d6d6d6"></div>
<div style="left:457.8px;top:860.4px;width:2.0px;height:562.6px;background:#d6d6d6"></div>
<div style="left:1092.0px;top:860.4px;width:2.0px;height:562.6px;background:#d6d6d6"></div>
<div style="left:1260.0px;top:860.4px;width:2.0px;height:562.6px;background:#d6d6d6"></div>
<div style="left:2060.0px;top:860.4px;width:2.0px;height:562.6px;background:#d6d6d6"></div>
<div style="left:2412.0px;top:860.4px;width:2.0px;height:562.6px;background:#d6d6d6"></div>
<div style="left:2766.0px;top:860.4px;width:2.0px;height:562.6px;background:#d6d6d6"></div>
<div class="t" id="th_Prescriber" style="left:467.6px;top:873.9px;font-size:20.25px;color:#777;letter-spacing:-0.394px;">Prescriber</div>
<div class="t" id="th_LastFillDate" style="left:1101.7px;top:873.7px;font-size:20.43px;color:#777;letter-spacing:-0.353px;">Last Fill Date</div>
<div class="t" id="th_Prescription" style="left:1270.0px;top:873.7px;font-size:20.48px;color:#777;letter-spacing:-0.378px;">Prescription</div>
<div class="t" id="th_Pharmacy" style="left:2070.0px;top:873.5px;font-size:20.64px;color:#777;letter-spacing:-0.477px;">Pharmacy</div>
<div class="t" id="th_Payer" style="left:2422.0px;top:874.1px;font-size:19.91px;color:#777;letter-spacing:-0.500px;">Payer</div>
<svg style="left:424.5px;top:876px" width="19" height="15" viewBox="0 0 19 15"><path d="M1.5 7.5 L6.8 12.5 L17.5 1.8" fill="none" stroke="#d8d8d8" stroke-width="3.8"/></svg>
<svg style="left:426px;top:913px" width="19" height="15" viewBox="0 0 19 15"><path d="M1.5 7.5 L6.8 12.5 L17.5 1.8" fill="none" stroke="#222" stroke-width="3.8"/></svg>
<div class="t" id="c_pres0" style="left:467.6px;top:920.1px;font-size:19.34px;color:#333;letter-spacing:-0.475px;">SMITH, JOHN</div>
<div class="t" id="c_date0" style="left:1148.0px;top:919.0px;font-size:20.64px;color:#333;letter-spacing:-0.192px;">02/20/2021</div>
<div class="t" id="c_drug0" style="left:1270.0px;top:918.5px;font-size:20.64px;color:#173a5e;font-weight:700;letter-spacing:0.253px;">Altace 10 mg Oral Cap</div>
<div class="t" id="c_dos0" style="left:1274.5px;top:948.0px;font-size:20.10px;color:#2f6aa5;letter-spacing:-0.480px;">Dosage:</div>
<div class="t" id="c_qty0" style="left:1274.5px;top:972.7px;font-size:20.64px;color:#2f6aa5;letter-spacing:-0.256px;">Quantity:</div>
<div class="t" id="c_qtyv0" style="left:1361.0px;top:972.8px;font-size:20.57px;color:#333;letter-spacing:-0.513px;">10.0</div>
<div class="t" id="c_ph10" style="left:2069.4px;top:918.5px;font-size:20.64px;color:#333;letter-spacing:-0.278px;">Pharmacy of America</div>
<div class="t" id="c_ph20" style="left:2069.4px;top:944.8px;font-size:20.64px;color:#333;letter-spacing:-0.346px;">123 Gold Stone Dr.   Anywhere</div>
<div class="t" id="c_ph30" style="left:2069.4px;top:970.3px;font-size:20.64px;color:#333;letter-spacing:-0.340px;">12345</div>
<div class="t" id="c_ph40" style="left:2074.0px;top:998.8px;font-size:18.72px;color:#2f6aa5;letter-spacing:-0.540px;">Ph:</div>
<div class="t" id="c_ph50" style="left:2074.0px;top:1024.7px;font-size:19.24px;color:#2f6aa5;letter-spacing:-0.480px;">Fax:</div>
<div class="t" id="c_pay0" style="left:2422.0px;top:919.5px;font-size:19.46px;color:#333;letter-spacing:-0.707px;">PBMX</div>
<svg style="left:426px;top:1085.6px" width="19" height="15" viewBox="0 0 19 15"><path d="M1.5 7.5 L6.8 12.5 L17.5 1.8" fill="none" stroke="#222" stroke-width="3.8"/></svg>
<div class="t" id="c_pres1" style="left:467.6px;top:1092.7px;font-size:19.34px;color:#333;letter-spacing:-0.475px;">SMITH, JOHN</div>
<div class="t" id="c_date1" style="left:1148.0px;top:1091.6px;font-size:20.64px;color:#333;letter-spacing:-0.192px;">12/26/2020</div>
<div class="t" id="c_drug1" style="left:1270.0px;top:1091.1px;font-size:20.64px;color:#173a5e;font-weight:700;letter-spacing:0.015px;">LEVAQUIN 500 MG TABLET</div>
<div class="t" id="c_dos1" style="left:1274.5px;top:1120.6px;font-size:20.10px;color:#2f6aa5;letter-spacing:-0.480px;">Dosage:</div>
<div class="t" id="c_qty1" style="left:1274.5px;top:1145.3px;font-size:20.64px;color:#2f6aa5;letter-spacing:-0.256px;">Quantity:</div>
<div class="t" id="c_qtyv1" style="left:1361.0px;top:1145.4px;font-size:20.57px;color:#333;letter-spacing:-0.513px;">60.0</div>
<div class="t" id="c_ph11" style="left:2069.4px;top:1091.1px;font-size:20.64px;color:#333;letter-spacing:-0.278px;">Pharmacy of America</div>
<div class="t" id="c_ph21" style="left:2069.4px;top:1117.4px;font-size:20.64px;color:#333;letter-spacing:-0.346px;">123 Gold Stone Dr.   Anywhere</div>
<div class="t" id="c_ph31" style="left:2069.4px;top:1142.9px;font-size:20.64px;color:#333;letter-spacing:-0.340px;">12345</div>
<div class="t" id="c_ph41" style="left:2074.0px;top:1171.4px;font-size:18.72px;color:#2f6aa5;letter-spacing:-0.540px;">Ph:</div>
<div class="t" id="c_ph51" style="left:2074.0px;top:1197.3px;font-size:19.24px;color:#2f6aa5;letter-spacing:-0.480px;">Fax:</div>
<div class="t" id="c_pay1" style="left:2422.0px;top:1092.1px;font-size:19.46px;color:#333;letter-spacing:-0.707px;">PBMX</div>
<svg style="left:426px;top:1257px" width="19" height="15" viewBox="0 0 19 15"><path d="M1.5 7.5 L6.8 12.5 L17.5 1.8" fill="none" stroke="#dedede" stroke-width="3.8"/></svg>
<div class="t" id="c_pres2" style="left:467.6px;top:1263.4px;font-size:20.21px;color:#333;letter-spacing:-0.389px;">B, Scott</div>
<div class="t" id="c_date2" style="left:1148.0px;top:1263.0px;font-size:20.64px;color:#333;letter-spacing:-0.192px;">07/18/2020</div>
<div class="t" id="c_drug2" style="left:1270.0px;top:1262.5px;font-size:20.64px;color:#173a5e;font-weight:700;letter-spacing:0.153px;">Lipitor 10 mg Tab</div>
<div class="t" id="c_dos2" style="left:1274.5px;top:1292.0px;font-size:20.10px;color:#2f6aa5;letter-spacing:-0.480px;">Dosage:</div>
<div class="t" id="c_dosv2" style="left:1351.5px;top:1291.5px;font-size:20.64px;color:#333;letter-spacing:-0.375px;">Take 1 tablet QD</div>
<div class="t" id="c_qty2" style="left:1274.5px;top:1316.7px;font-size:20.64px;color:#2f6aa5;letter-spacing:-0.256px;">Quantity:</div>
<div class="t" id="c_qtyv2" style="left:1361.0px;top:1316.8px;font-size:20.57px;color:#333;letter-spacing:-0.513px;">30.0</div>
<div class="t" id="c_ph12" style="left:2069.4px;top:1262.5px;font-size:20.64px;color:#333;letter-spacing:-0.278px;">Pharmacy of America</div>
<div class="t" id="c_ph22" style="left:2069.4px;top:1288.8px;font-size:20.64px;color:#333;letter-spacing:-0.346px;">123 Gold Stone Dr.   Anywhere</div>
<div class="t" id="c_ph32" style="left:2069.4px;top:1314.3px;font-size:20.64px;color:#333;letter-spacing:-0.340px;">12345</div>
<div class="t" id="c_ph42" style="left:2074.0px;top:1342.8px;font-size:18.72px;color:#2f6aa5;letter-spacing:-0.540px;">Ph:</div>
<div class="t" id="c_ph52" style="left:2074.0px;top:1368.7px;font-size:19.24px;color:#2f6aa5;letter-spacing:-0.480px;">Fax:</div>
<div style="left:410.3px;top:899.8px;width:48.5px;height:513.2px;border:6px solid #e53e2b;box-sizing:border-box"></div>
<div style="left:2850.5px;top:180.0px;width:29.5px;height:1246.0px;background:#f8f8f8;border-left:1.5px solid #e6e6e6;box-sizing:border-box"></div>
<div style="left:2858.0px;top:185.0px;width:16.0px;height:1141.0px;background:#c1c1c1;border-radius:8px"></div>
<div style="left:2817.7px;top:991.5px;width:56.0px;height:140.0px;background:#f0844f;border-radius:28px"></div>
<div class="t" style="left:2845.7px;top:1061.5px;font-size:27px;color:#fff;transform:translate(-50%,-50%) rotate(90deg);letter-spacing:1px">? Help</div>
<div style="left:2818.8px;top:1138.2px;width:55.0px;height:143.5px;background:#173a5e;border-radius:3px 3px 28px 28px"></div>
<svg style="left:2834px;top:1144px" width="26" height="26" viewBox="0 0 26 26"><circle cx="13" cy="13" r="10.5" fill="none" stroke="#fff" stroke-width="2.2"/><text x="13" y="18.5" font-size="15" font-weight="700" fill="#fff" text-anchor="middle" font-family="Liberation Sans" transform="rotate(90 13 13)">?</text></svg>
<div class="t" style="left:2846px;top:1216px;font-size:19px;font-weight:700;color:#fff;transform:translate(-50%,-50%) rotate(90deg)">Support</div>
</body></html>
